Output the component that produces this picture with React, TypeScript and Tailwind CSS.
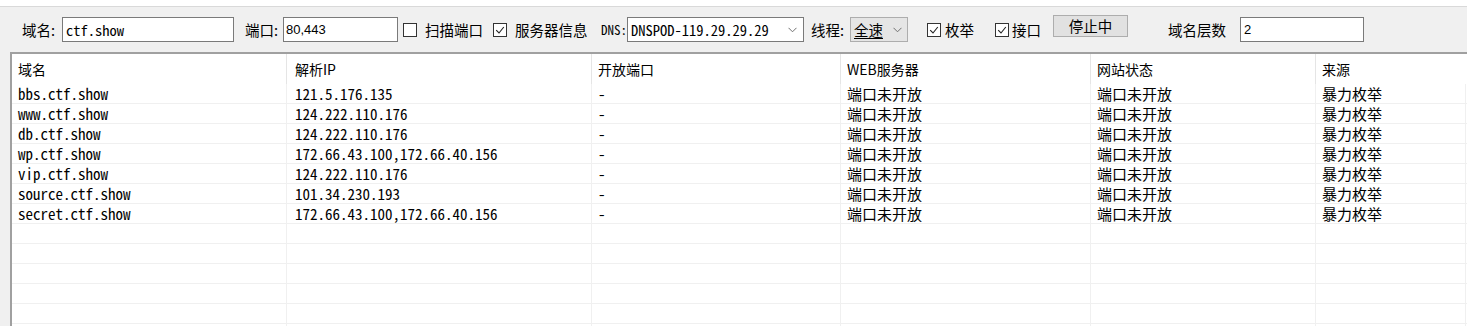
import React from 'react';

const MONO = "font-['Noto_Sans_Mono_CJK_SC','Noto_Sans_CJK_SC',monospace]";
const CJK = "font-['Noto_Sans_CJK_SC','Noto_Sans',sans-serif]";

const ROWS = [
  ['bbs.ctf.show', '121.5.176.135'],
  ['www.ctf.show', '124.222.110.176'],
  ['db.ctf.show', '124.222.110.176'],
  ['wp.ctf.show', '172.66.43.100,172.66.40.156'],
  ['vip.ctf.show', '124.222.110.176'],
  ['source.ctf.show', '101.34.230.193'],
  ['secret.ctf.show', '172.66.43.100,172.66.40.156'],
];

const COLS = [
  { label: '域名', w: 'w-[275px]', pl: 'pl-[6px]' },
  { label: '解析IP', w: 'w-[305px]', pl: 'pl-[8px]' },
  { label: '开放端口', w: 'w-[249px]', pl: 'pl-[6px]' },
  { label: 'WEB服务器', w: 'w-[250px]', pl: 'pl-[6px]' },
  { label: '网站状态', w: 'w-[225px]', pl: 'pl-[6px]' },
  { label: '来源', w: 'w-[150px]', pl: 'pl-[6px]' },
];

function Check({ checked }: { checked?: boolean }) {
  return (
    <span className="w-[14px] h-[14px] border border-[#333] bg-white flex items-center justify-center shrink-0">
      {checked && (
        <svg width="10" height="10" viewBox="0 0 10 10">
          <path d="M1.2 5.2 L4 8 L8.8 2" fill="none" stroke="#222" strokeWidth="1.1" />
        </svg>
      )}
    </span>
  );
}

function Chevron() {
  return (
    <svg width="9" height="6" viewBox="0 0 9 6" className="shrink-0">
      <path d="M0.5 0.8 L4.5 4.8 L8.5 0.8" fill="none" stroke="#707070" strokeWidth="1" />
    </svg>
  );
}

export default function App() {
  return (
    <div className={`w-[1467px] h-[326px] overflow-hidden bg-white text-black ${CJK}`}>
      <div className="h-[7px] bg-white border-b border-[#d9d9d9]" />

      {/* 工具栏 */}
      <div className="h-[45px] bg-[#f0f0f0] flex items-center pl-[22px] text-[14.5px]">
        <span className="w-[40px]">域名:</span>
        <div className={`w-[172px] h-[25px] bg-white border border-[#7a7a7a] flex items-center pl-[3px] text-[14.5px] ${MONO}`}>
          ctf.show
        </div>
        <span className="ml-[11px] w-[38px]">端口:</span>
        <div className="w-[115px] h-[25px] bg-white border border-[#7a7a7a] flex items-center pl-[2px] text-[13px] font-['Liberation_Sans',sans-serif]">
          80,443
        </div>
        <span className="ml-[5px]"><Check /></span>
        <span className="ml-[8px] w-[68px]">扫描端口</span>
        <Check checked />
        <span className="ml-[8px] w-[82px]">服务器信息</span>
        <span className={`w-[30px] overflow-hidden flex justify-end text-[13px] ${MONO}`}>
          <span className="whitespace-nowrap">DNS:</span>
        </span>
        <div className={`w-[177px] h-[25px] bg-white border border-[#7a7a7a] flex items-center justify-between pl-[3px] pr-[6px] text-[14.5px] ${MONO}`}>
          <span>DNSPOD-119.29.29.29</span>
          <Chevron />
        </div>
        <span className="ml-[7px] w-[39px]">线程:</span>
        <div className="w-[58px] h-[25px] bg-[#e5e5e5] border border-[#adadad] flex items-center justify-between pl-[3px] pr-[5px]">
          <span className="underline underline-offset-2">全速</span>
          <Chevron />
        </div>
        <span className="ml-[19px]"><Check checked /></span>
        <span className="ml-[4px] w-[50px]">枚举</span>
        <Check checked />
        <span className="ml-[3px] w-[41px]">接口</span>
        <div className="w-[75px] h-[22px] -mt-[8px] bg-[#e1e1e1] border border-[#adadad] flex items-center justify-center">
          停止中
        </div>
        <span className="ml-[40px] w-[72px]">域名层数</span>
        <div className="w-[124px] h-[25px] bg-white border border-[#7a7a7a] flex items-center pl-[3px] text-[13px] font-['Liberation_Sans',sans-serif]">
          2
        </div>
      </div>

      {/* 结果列表 */}
      <div className="flex bg-[#f0f0f0]">
        <div className="w-[10px] shrink-0" />
        <div className="w-[1457px] border-t-2 border-l-2 border-[#a0a0a0] bg-white">
          <div className="flex h-[30px] items-center text-[14px]">
            {COLS.map((c, i) => (
              <div
                key={c.label}
                className={`${c.w} ${c.pl} h-full flex items-center shrink-0 ${i < COLS.length - 1 ? 'border-r border-[#e5e5e5]' : ''}`}
              >
                {c.label}
              </div>
            ))}
          </div>
          {Array.from({ length: 13 }).map((_, r) => {
            const row = ROWS[r];
            const cells = row
              ? [row[0], row[1], '-', '端口未开放', '端口未开放', '暴力枚举']
              : ['', '', '', '', '', ''];
            return (
              <div key={r} className="flex h-[20px] border-b border-[#f0f0f0]">
                {COLS.map((c, i) => (
                  <div
                    key={i}
                    className={`${c.w} ${c.pl} shrink-0 border-r border-[#f0f0f0] leading-[19px] whitespace-nowrap overflow-hidden ${
                      i < 3 ? `text-[15px] ${MONO}` : 'text-[15px]'
                    }`}
                  >
                    {cells[i]}
                  </div>
                ))}
              </div>
            );
          })}
        </div>
      </div>
    </div>
  );
}
